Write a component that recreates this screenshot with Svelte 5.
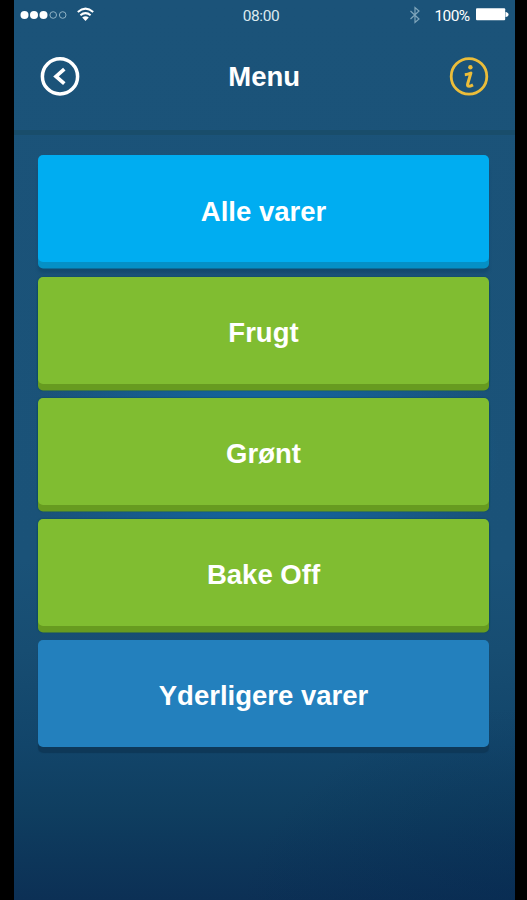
<script>
  const items = [
    { label: 'Alle varer', tone: 'cyan' },
    { label: 'Frugt', tone: 'green' },
    { label: 'Grønt', tone: 'green' },
    { label: 'Bake Off', tone: 'green' },
    { label: 'Yderligere varer', tone: 'blue' }
  ];
</script>

<div class="frame">
  <main class="screen">
    <div class="status">
      <div class="signal">
        <svg width="76" height="18" viewBox="0 0 76 18">
          <g fill="#fff">
            <circle cx="4.5" cy="9" r="4" />
            <circle cx="14" cy="9" r="4" />
            <circle cx="23.5" cy="9" r="4" />
          </g>
          <g fill="none" stroke="#8fb2c5" stroke-width="1">
            <circle cx="33.2" cy="9" r="3.3" />
            <circle cx="42.7" cy="9" r="3.3" />
          </g>
          <g fill="none" stroke="#fff" stroke-width="2">
            <path d="M57.8 6Q65.5-.8 73.2 6" />
            <path d="M60.4 9.3Q65.5 4.9 70.6 9.3" />
          </g>
          <path d="M62.2 11.5Q65.5 9 68.8 11.5L65.5 15Z" fill="#fff" />
        </svg>
      </div>
      <span class="time">08:00</span>
      <div class="power">
        <svg width="12" height="18" viewBox="0 0 12 18">
          <path d="M1.5 5L10 13L6 16.5V1.5L10 5L1.5 13" fill="none" stroke="#7fa5bb" stroke-width="1.2" />
        </svg>
        <span class="percent">100%</span>
        <svg width="33" height="13" viewBox="0 0 33 13">
          <rect x="0" y="0.3" width="29.2" height="12" rx="1" fill="#fff" />
          <path d="M29.5 4Q32.5 4.5 32.5 6.5T29.5 9Z" fill="#fff" />
        </svg>
      </div>
    </div>

    <header>
      <button class="icon" aria-label="Tilbage">
        <svg width="40" height="40" viewBox="0 0 40 40" fill="none" stroke="#fff">
          <circle cx="20" cy="20.4" r="17.6" stroke-width="3.5" />
          <path d="M24.3 13.1L16 20.4L24.3 27.7" stroke-width="3.7" />
        </svg>
      </button>
      <h1>Menu</h1>
      <button class="icon" aria-label="Info">
        <svg width="40" height="40" viewBox="0 0 40 40" fill="none" stroke="#ebbd3a">
          <circle cx="20" cy="20.4" r="17.8" stroke-width="2.8" />
          <circle cx="21.4" cy="11.3" r="2.2" fill="#ebbd3a" stroke="none" />
          <path d="M15.8 18.7Q19 18.4 21.9 17L18.7 27.8Q17.6 32 24 28.8" stroke-width="3" stroke-linejoin="round" />
        </svg>
      </button>
    </header>

    <nav>
      {#each items as item}
        <button class="item {item.tone}">{item.label}</button>
      {/each}
    </nav>
  </main>
</div>

<style>
  :global(body) { margin: 0; background: #000; }
  .frame {
    box-sizing: border-box;
    width: 527px;
    height: 900px;
    padding: 0 12.5px 0 13.5px;
    background: #000;
    font-family: "Liberation Sans", Arial, sans-serif;
    color: #fff;
  }
  .screen {
    height: 900px;
    overflow: hidden;
    background:
      radial-gradient(ellipse 235px 170px at 250px 455px, #1268a4 0%, #14629a 35%, rgba(22, 93, 140, 0) 100%),
      radial-gradient(ellipse 300px 230px at 104% 104%, rgba(5, 40, 80, .5), rgba(5, 40, 80, 0)),
      linear-gradient(#1b5379 0, #1a5278 560px, #174d72 650px, #12456a 745px, #0f3e60 810px, #0d365a 860px, #0c3055 900px);
  }
  .status {
    display: grid;
    grid-template-columns: 1fr auto 1fr;
    align-items: center;
    height: 30px;
    box-sizing: border-box;
    padding: 0 6px 0 6px;
  }
  .signal, .power { display: flex; align-items: center; }
  .signal { padding-bottom: 1px; }
  .power { justify-content: flex-end; padding-bottom: 1px; }
  .time, .percent {
    font-family: Roboto, sans-serif;
    font-size: 15.5px;
    line-height: 18px;
    color: #dceaf0;
    letter-spacing: -.45px;
  }
  .time { padding: 1px 6px 0 0; }
  .percent { margin: 2px 6px 0 13px; color: #fff; letter-spacing: -.6px; }
  header {
    box-sizing: border-box;
    height: 105px;
    display: flex;
    align-items: flex-start;
    justify-content: space-between;
    padding: 26px 25.5px 0 26px;
    border-bottom: 5px solid #194d6b;
  }
  h1 { margin: 5px 0 0; font-size: 27.5px; line-height: 32px; font-weight: 700; }
  button { border: 0; padding: 0; font: inherit; color: inherit; background: none; }
  .icon { width: 40px; height: 40px; }
  .icon svg { display: block; }
  nav {
    display: flex;
    flex-direction: column;
    gap: 14.2px;
    padding: 20.4px 25.5px 0 24.5px;
  }
  .item {
    box-sizing: border-box;
    height: 107px;
    padding-top: 5.4px;
    border-radius: 5px;
    font-size: 27.5px;
    line-height: 32px;
    font-weight: 700;
  }
  .cyan {
    background: #00adf1;
    box-shadow: 0 6.5px #0590c6, 0 11px 3px rgba(14, 67, 104, .55);
  }
  .green {
    background: #80bd31;
    box-shadow: 0 6.5px #679b20, 0 6px 1px 1px rgba(12, 75, 94, .55), 0 0 1px 1px rgba(12, 75, 94, .4);
  }
  .blue {
    background: #2380bd;
    box-shadow: 0 6px 1px #0e3858;
  }
</style>
